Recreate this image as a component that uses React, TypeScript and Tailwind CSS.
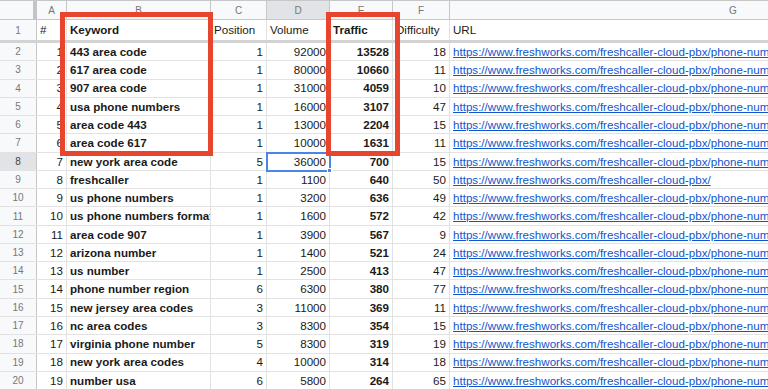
import React from 'react';

type Row = [string, string, string, string, string, string, string];

const URL_LONG = 'https://www.freshworks.com/freshcaller-cloud-pbx/phone-numbers/';
const URL_SHORT = 'https://www.freshworks.com/freshcaller-cloud-pbx/';

const rows: Row[] = [
    ['1', '443 area code', '1', '92000', '13528', '18', URL_LONG],
    ['2', '617 area code', '1', '80000', '10660', '11', URL_LONG],
    ['3', '907 area code', '1', '31000', '4059', '10', URL_LONG],
    ['4', 'usa phone numbers', '1', '16000', '3107', '47', URL_LONG],
    ['5', 'area code 443', '1', '13000', '2204', '15', URL_LONG],
    ['6', 'area code 617', '1', '10000', '1631', '11', URL_LONG],
    ['7', 'new york area code', '5', '36000', '700', '15', URL_LONG],
    ['8', 'freshcaller', '1', '1100', '640', '50', URL_SHORT],
    ['9', 'us phone numbers', '1', '3200', '636', '49', URL_LONG],
    ['10', 'us phone numbers format', '1', '1600', '572', '42', URL_LONG],
    ['11', 'area code 907', '1', '3900', '567', '9', URL_LONG],
    ['12', 'arizona number', '1', '1400', '521', '24', URL_LONG],
    ['13', 'us number', '1', '2500', '413', '47', URL_LONG],
    ['14', 'phone number region', '6', '6300', '380', '77', URL_LONG],
    ['15', 'new jersey area codes', '3', '11000', '369', '11', URL_LONG],
    ['16', 'nc area codes', '3', '8300', '354', '15', URL_LONG],
    ['17', 'virginia phone number', '5', '8300', '319', '19', URL_LONG],
    ['18', 'new york area codes', '4', '10000', '314', '18', URL_LONG],
    ['19', 'number usa', '6', '5800', '264', '65', URL_LONG],
];

// column letter header
const ColHead: React.FC<{ className: string; label: string }> = ({ className, label }) => (
    <div className={`flex items-center justify-center border-r border-[#c7c7c7] text-[10px] text-[#777] shrink-0 ${className}`}>
        {label}
    </div>
);

const Cell: React.FC<{ className: string; children?: React.ReactNode }> = ({ className, children }) => (
    <div className={`flex items-center px-[3px] border-r border-[#e2e2e2] overflow-hidden whitespace-nowrap shrink-0 ${className}`}>
        {children}
    </div>
);

export default function App() {
    return (
        <div
            className="relative w-[768px] h-[389px] overflow-hidden bg-white text-[11.6px] text-[#1a1a1a]"
            style={{ fontFamily: '"Liberation Sans", Arial, sans-serif' }}
        >
            {/* column letters */}
            <div className="flex h-[20px] bg-[#f8f9fa] border-t border-b border-[#c7c7c7]">
                <div className="w-[37px] shrink-0 border-r-4 border-[#c4c4c4]" />
                <ColHead className="w-[30px]" label="A" />
                <ColHead className="w-[144px]" label="B" />
                <ColHead className="w-[56px]" label="C" />
                <ColHead className="w-[63px] bg-[#e1e3e6] text-[#444]" label="D" />
                <ColHead className="w-[63px]" label="E" />
                <ColHead className="w-[57px]" label="F" />
                <ColHead className="w-[567px]" label="G" />
            </div>

            {/* header row */}
            <div className="flex h-[20px]">
                <div className="w-[37px] shrink-0 flex items-center justify-center bg-[#f8f9fa] border-r border-[#c7c7c7] text-[10px] text-[#777]">
                    1
                </div>
                <Cell className="w-[30px]">#</Cell>
                <Cell className="w-[144px] font-bold">Keyword</Cell>
                <Cell className="w-[56px]">Position</Cell>
                <Cell className="w-[63px]">Volume</Cell>
                <Cell className="w-[63px] font-bold">Traffic</Cell>
                <Cell className="w-[57px]">Difficulty</Cell>
                <Cell className="w-[567px]">URL</Cell>
            </div>

            {/* frozen row bar */}
            <div className="h-[3px] bg-[#d3d3d3]" />

            {rows.map((r, i) => {
                const selected = i === 6;
                return (
                    <div key={i} className="flex h-[18.28px] border-b border-[#e2e2e2]">
                        <div
                            className={`w-[37px] shrink-0 flex items-center justify-center border-r border-[#c7c7c7] text-[10px] ${
                                selected ? 'bg-[#e1e3e6] text-[#444]' : 'bg-[#f8f9fa] text-[#777]'
                            }`}
                        >
                            {i + 2}
                        </div>
                        <Cell className="w-[30px] justify-end">{r[0]}</Cell>
                        <Cell className="w-[144px] font-bold">{r[1]}</Cell>
                        <Cell className="w-[56px] justify-end">{r[2]}</Cell>
                        <Cell className="w-[63px] justify-end">{r[3]}</Cell>
                        <Cell className="w-[63px] justify-end font-bold">{r[4]}</Cell>
                        <Cell className="w-[57px] justify-end">{r[5]}</Cell>
                        <Cell className="w-[567px]">
                            <span className="text-[#1155cc] underline">{r[6]}</span>
                        </Cell>
                    </div>
                );
            })}

            {/* selected cell D8 */}
            <div className="absolute left-[266px] top-[152px] w-[65px] h-[20px] border-2 border-[#4a86e8]" />
            <div className="absolute left-[327px] top-[168px] w-[5px] h-[5px] bg-[#4a86e8] border border-white" />

            {/* red highlight boxes */}
            <div className="absolute left-[60px] top-[12px] w-[153px] h-[144px] border-[5px] border-[#e8452f]" />
            <div className="absolute left-[326px] top-[12px] w-[74px] h-[144px] border-[5px] border-[#e8452f]" />
        </div>
    );
}
